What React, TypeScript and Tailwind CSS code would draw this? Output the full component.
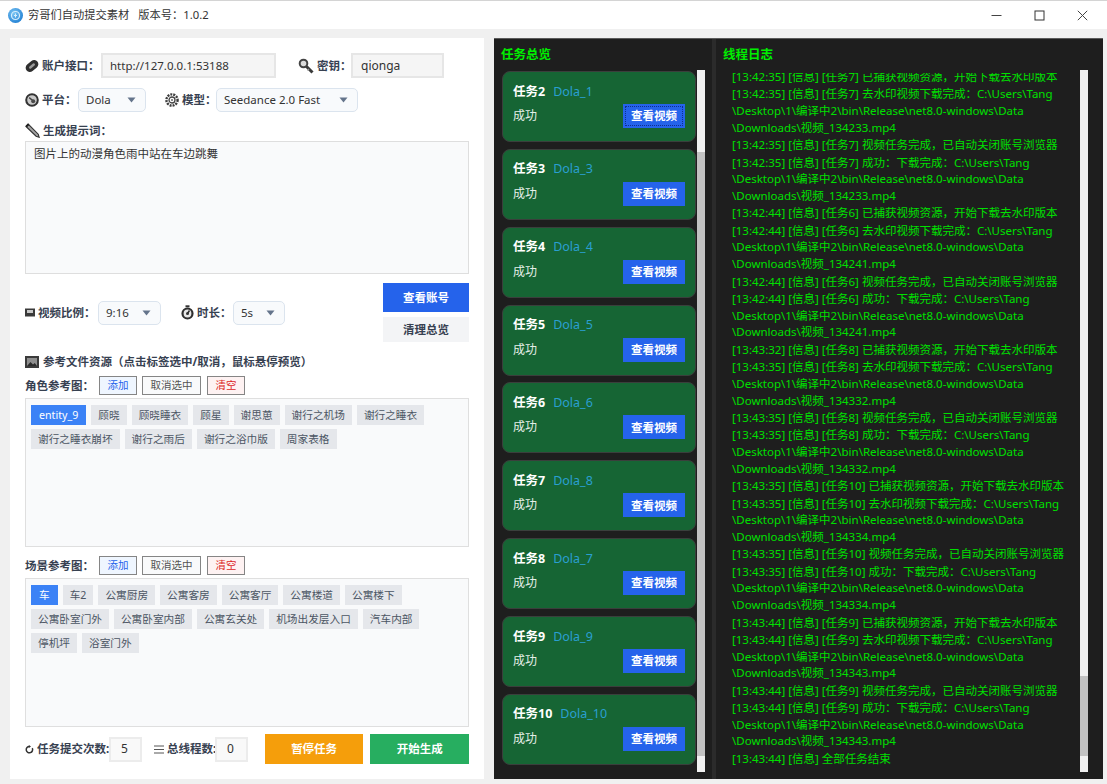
import React from "react";

const IconLink = () => (
  <svg width="14" height="14" viewBox="0 0 14 14" className="shrink-0">
    <g transform="rotate(-40 7 7)">
      <rect x="0" y="2.8" width="14" height="8.4" rx="4.2" fill="#2f2f2f" />
      <rect x="3.5" y="5.8" width="7" height="2.4" rx="1.2" fill="#9a9a9a" />
    </g>
  </svg>
);
const IconKey = () => (
  <svg width="16" height="16" viewBox="0 0 16 16" className="shrink-0">
    <circle cx="5.5" cy="5.5" r="3.8" fill="#dcdcdc" stroke="#444" strokeWidth="2" />
    <path d="M8.5 8.5L14.5 14.5" stroke="#3a3a3a" strokeWidth="3" />
    <path d="M11 11l-1.5 1.5" stroke="#999" strokeWidth="1.2" />
  </svg>
);
const IconDial = () => (
  <svg width="14" height="14" viewBox="0 0 14 14" className="shrink-0">
    <circle cx="7" cy="7" r="5.8" fill="#c9c9c9" stroke="#333" strokeWidth="2" />
    <path d="M4.2 4.6L8 7.8" stroke="#444" strokeWidth="1.4" />
    <circle cx="8.2" cy="8.2" r="2" fill="#4a4a4a" />
  </svg>
);
const IconGear = () => (
  <svg width="14" height="14" viewBox="0 0 14 14" className="shrink-0">
    <circle cx="7" cy="7" r="5.6" fill="none" stroke="#3d3d3d" strokeWidth="2.4" strokeDasharray="2 1" />
    <circle cx="7" cy="7" r="3" fill="none" stroke="#444" strokeWidth="1.3" />
    <circle cx="7" cy="7" r="1" fill="#666" />
  </svg>
);
const IconPencil = () => (
  <svg width="15" height="15" viewBox="0 0 15 15" className="shrink-0">
    <path d="M1 3.4L3.2 1.2l10 10 .9 3-3-.9z" fill="#a5a5a5" stroke="#333" strokeWidth="1.2" />
    <path d="M1.2 3.6l2.4-2.4" stroke="#1f1f1f" strokeWidth="2" />
  </svg>
);
const IconFilm = () => (
  <svg width="10" height="9" viewBox="0 0 10 9" className="shrink-0">
    <rect x="0" y="0.5" width="10" height="8" fill="#3a3a3a" />
    <rect x="2" y="2" width="6" height="3" fill="#c8c8c8" />
  </svg>
);
const IconTimer = () => (
  <svg width="13" height="15" viewBox="0 0 13 15" className="shrink-0">
    <rect x="4.5" y="0.3" width="4" height="2" fill="#333" />
    <circle cx="6.5" cy="8.5" r="5" fill="#e8e8e8" stroke="#2f2f2f" strokeWidth="2.2" />
    <path d="M6.5 8.5L8.5 5.5" stroke="#2f2f2f" strokeWidth="1.5" />
    <circle cx="6.5" cy="8.6" r="1.5" fill="#333" />
  </svg>
);
const IconPicture = () => (
  <svg width="14" height="12" viewBox="0 0 14 12" className="shrink-0">
    <rect x="0" y="0" width="14" height="12" fill="#3b3b3b" />
    <rect x="2" y="2" width="10" height="8" fill="#8f8f8f" />
    <path d="M2 10l3.5-4 2.5 2.5 1.8-1.5L12 10z" fill="#2b2b2b" />
  </svg>
);
const IconRefresh = () => (
  <svg width="9" height="9" viewBox="0 0 9 9" className="shrink-0">
    <path d="M7.3 3.2A3.2 3.2 0 1 1 4.4 1.4" fill="none" stroke="#333" strokeWidth="1.5" />
    <path d="M3.8 0l2.2 1.4-2.2 1.5z" fill="#333" />
  </svg>
);
const IconLines = () => (
  <svg width="10" height="9" viewBox="0 0 10 9" className="shrink-0">
    <path d="M0 1h10M0 4.5h10M0 8h10" stroke="#555" strokeWidth="1" />
  </svg>
);
const Caret = () => (
  <svg width="9" height="6" viewBox="0 0 9 6" className="shrink-0">
    <path d="M0.5 0.5h8L4.5 5.5z" fill="#64748b" />
  </svg>
);

const Select = ({ v, w }: { v: string; w: string }) => (
  <div className={`${w} h-[24px] flex items-center justify-between pl-[7px] pr-[9px] rounded-[5px] bg-[#f8fafc] border border-[#dbe4ee] text-[#333333] text-[11.5px]`}>
    <span>{v}</span>
    <Caret />
  </div>
);

const SmallBtn = ({ t, w, cls }: { t: string; w: string; cls: string }) => (
  <div className={`${w} h-[19px] flex items-center justify-center border border-[#858585] text-[10.5px] ${cls}`}>{t}</div>
);

const Tag = ({ t, on }: { t: string; on?: boolean }) => (
  <div className={`h-[20px] flex items-center text-[10.67px] ${on ? "px-[8px] bg-[#3b82f6] text-white" : "px-[7px] bg-[#e5e7eb] text-[#4b5563]"}`}>{t}</div>
);

const TagBox = ({ tags }: { tags: string[] }) => (
  <div className="w-[444px] h-[149px] bg-[#f9fafb] border border-[#dfdfdf] pl-[5px] pt-[6px] flex flex-wrap content-start gap-x-[5px] gap-y-[4px]">
    {tags.map((t, i) => (
      <Tag key={t} t={t} on={i === 0} />
    ))}
  </div>
);

const Label = ({ icon, t, cls = "" }: { icon?: React.ReactNode; t: string; cls?: string }) => (
  <div className={`flex items-center gap-[3px] text-[11.5px] font-bold text-[#374151] whitespace-nowrap ${cls}`}>
    {icon}
    <span>{t}</span>
  </div>
);

const Card = ({ n, name, focus }: { n: string; name: string; focus?: boolean }) => (
  <div className="w-[194px] h-[71px] shrink-0 rounded-[8px] bg-[#166534] border border-[#3a3f3c] pl-[10px] pr-[10px] pt-[11px]">
    <div className="flex items-center gap-[8px] h-[18px]">
      <span className="text-[12.5px] font-bold text-white">{n}</span>
      <span className="text-[12.5px] text-[#2a9fd0]">{name}</span>
    </div>
    <div className="flex items-center justify-between mt-[3px]">
      <span className="text-[12px] text-[#e5efe8]">成功</span>
      <div className={`w-[62px] h-[24px] bg-[#2563eb] flex items-center justify-center text-[11.5px] font-bold text-white ${focus ? "outline-1 outline-dotted outline-[#0f2f8f] -outline-offset-3" : ""}`}>查看视频</div>
    </div>
  </div>
);

const Scrollbar = ({ top, h, cls }: { top: string; h: string; cls: string }) => (
  <div className={`w-[8px] h-[702px] bg-[#f0f0f0] shrink-0 flex flex-col ${cls}`}>
    <div className={top} />
    <div className={`${h} bg-[#c2c2c2]`} />
  </div>
);

const p = "C:\\Users\\Tang";
const mid = "\\Desktop\\1\\编译中2\\bin\\Release\\net8.0-windows\\Data";
function group(time: string, task: string, vid: string) {
  const t = `[${time}] [信息] [任务${task}] `;
  return {
    dl: [[`${t}去水印视频下载完成：${p}`, mid, `\\Downloads\\视频_${vid}.mp4`]],
    done: [[`${t}视频任务完成，已自动关闭账号浏览器`], [`${t}成功：下载完成：${p}`, mid, `\\Downloads\\视频_${vid}.mp4`]],
  };
}
const cap = (time: string, task: string) => [`[${time}] [信息] [任务${task}] 已捕获视频资源，开始下载去水印版本`];
const g7 = group("13:42:35", "7", "134233");
const g6 = group("13:42:44", "6", "134241");
const g8a = group("13:43:35", "8", "134332");
const g10 = group("13:43:35", "10", "134334");
const g9 = group("13:43:44", "9", "134343");
const entries: string[][] = [
  cap("13:42:35", "7"),
  ...g7.dl,
  ...g7.done,
  cap("13:42:44", "6"),
  ...g6.dl,
  ...g6.done,
  cap("13:43:32", "8"),
  ...g8a.dl,
  ...g8a.done,
  cap("13:43:35", "10"),
  ...g10.dl,
  ...g10.done,
  cap("13:43:44", "9"),
  ...g9.dl,
  ...g9.done,
  [`[13:43:44] [信息] 全部任务结束`],
];

export default function App() {
  return (
    <div className="w-[1107px] h-[784px] overflow-hidden bg-[#f0f0f0] flex flex-col [font-family:'Noto_Sans','Noto_Sans_CJK_SC',sans-serif]">
      {/* Title bar */}
      <div className="h-[29px] shrink-0 bg-white border-t border-[#d4d4d4] flex items-center pl-[8px] text-[11.25px] text-[#333333]">
        <svg width="15" height="15" viewBox="0 0 15 15" className="shrink-0">
          <defs>
            <radialGradient id="a" cx="0.4" cy="0.35" r="0.8">
              <stop offset="0" stopColor="#7cc6f4" />
              <stop offset="1" stopColor="#1476cf" />
            </radialGradient>
          </defs>
          <circle cx="7.5" cy="7.5" r="7.5" fill="url(#a)" />
          <circle cx="7.5" cy="7.5" r="4" fill="none" stroke="#d6eefc" strokeWidth="1.2" />
          <path d="M6 7.5h3M7.5 5.5v4" stroke="#d6eefc" strokeWidth="1" />
        </svg>
        <span className="ml-[5px]">穷哥们自动提交素材</span>
        <span className="ml-[9px]">版本号：1.0.2</span>
        <div className="ml-auto flex items-center">
          <div className="w-[46px] flex justify-center"><svg width="11" height="11" viewBox="0 0 11 11"><path d="M0.5 5.5h10" stroke="#444" strokeWidth="1" /></svg></div>
          <div className="w-[40px] flex justify-center"><svg width="11" height="11" viewBox="0 0 11 11"><rect x="1" y="1" width="9" height="9" fill="none" stroke="#333" strokeWidth="1" /></svg></div>
          <div className="w-[46px] flex justify-center mr-[2px]"><svg width="11" height="11" viewBox="0 0 11 11"><path d="M0.8 0.8l9.4 9.4M10.2 0.8l-9.4 9.4" stroke="#444" strokeWidth="1" /></svg></div>
        </div>
      </div>

      <div className="flex flex-1 pt-[9px] pl-[10px] pb-[5px]">
        {/* Left panel */}
        <div className="w-[474px] h-[741px] bg-white pl-[15px] flex flex-col">
          <div className="flex items-center mt-[15px] h-[25px]">
            <div className="w-[76px]"><Label icon={<IconLink />} t="账户接口：" /></div>
            <div className="w-[175px] h-[25px] flex items-center pl-[7px] bg-[#f5f5f5] border-2 border-[#e6e6e6] text-[11.5px] text-[#333333]">http://127.0.0.1:53188</div>
            <div className="ml-[22px] w-[53px]"><Label icon={<IconKey />} t="密钥：" /></div>
            <div className="w-[93px] h-[25px] flex items-center pl-[8px] bg-[#f5f5f5] border-2 border-[#e6e6e6] text-[12px] text-[#333333]">qionga</div>
          </div>

          <div className="flex items-center mt-[10px] h-[24px]">
            <div className="w-[53px]"><Label icon={<IconDial />} t="平台：" /></div>
            <Select v="Dola" w="w-[68px]" />
            <div className="ml-[19px] w-[51px]"><Label icon={<IconGear />} t="模型：" /></div>
            <Select v="Seedance 2.0 Fast" w="w-[142px]" />
          </div>

          <Label cls="mt-[9px] h-[19px]" icon={<IconPencil />} t="生成提示词：" />
          <div className="w-[444px] h-[133px] bg-[#f9fafb] border border-[#dedede] mt-[1px] pl-[8px] pt-[3px] text-[11.5px] leading-[18px] text-[#333333]">图片上的动漫角色雨中站在车边跳舞</div>

          <div className="flex mt-[9px] w-[444px]">
            <div className="flex items-center h-[25px] mt-[17px]">
              <div className="w-[73px]"><Label icon={<IconFilm />} t="视频比例：" /></div>
              <Select v="9:16" w="w-[63px]" />
              <div className="ml-[20px] w-[52px]"><Label icon={<IconTimer />} t="时长：" /></div>
              <Select v="5s" w="w-[52px]" />
            </div>
            <div className="ml-auto w-[86px] flex flex-col gap-[5px]">
              <div className="h-[29px] bg-[#2563eb] text-white font-bold text-[11.5px] flex items-center justify-center">查看账号</div>
              <div className="h-[25px] bg-[#f3f4f6] text-[#374151] font-bold text-[11.5px] flex items-center justify-center">清理总览</div>
            </div>
          </div>

          <Label cls="mt-[10px] h-[20px] gap-[4px]" icon={<IconPicture />} t="参考文件资源（点击标签选中/取消，鼠标悬停预览）" />

          <div className="flex items-center mt-[4px] h-[19px]">
            <div className="w-[74px]"><Label t="角色参考图：" /></div>
            <SmallBtn t="添加" w="w-[38px]" cls="bg-[#eff6ff] text-[#2563eb]" />
            <SmallBtn t="取消选中" w="w-[59px] ml-[5px]" cls="bg-[#f9fafb] text-[#555555]" />
            <SmallBtn t="清空" w="w-[38px] ml-[6px]" cls="bg-[#fef2f2] text-[#dc2626]" />
          </div>
          <div className="mt-[3px]">
            <TagBox tags={["entity_9", "顾晓", "顾晓睡衣", "顾星", "谢思葸", "谢行之机场", "谢行之睡衣", "谢行之睡衣崩坏", "谢行之雨后", "谢行之浴巾版", "周家表格"]} />
          </div>

          <div className="flex items-center mt-[9px] h-[19px]">
            <div className="w-[74px]"><Label t="场景参考图：" /></div>
            <SmallBtn t="添加" w="w-[38px]" cls="bg-[#eff6ff] text-[#2563eb]" />
            <SmallBtn t="取消选中" w="w-[59px] ml-[5px]" cls="bg-[#f9fafb] text-[#555555]" />
            <SmallBtn t="清空" w="w-[38px] ml-[6px]" cls="bg-[#fef2f2] text-[#dc2626]" />
          </div>
          <div className="mt-[3px]">
            <TagBox tags={["车", "车2", "公寓厨房", "公寓客房", "公寓客厅", "公寓楼道", "公寓楼下", "公寓卧室门外", "公寓卧室内部", "公寓玄关处", "机场出发层入口", "汽车内部", "停机坪", "浴室门外"]} />
          </div>

          <div className="flex items-center mt-[7px] h-[30px] w-[444px]">
            <div className="w-[84px]"><Label icon={<IconRefresh />} t="任务提交次数:" /></div>
            <div className="w-[33px] h-[25px] flex items-center pl-[10px] bg-[#f9f9f9] border-2 border-[#ececec] text-[12px] text-[#333333]">5</div>
            <div className="ml-[12px] w-[61px]"><Label icon={<IconLines />} t="总线程数:" /></div>
            <div className="w-[33px] h-[25px] flex items-center pl-[10px] bg-[#f9f9f9] border-2 border-[#ececec] text-[12px] text-[#333333]">0</div>
            <div className="ml-[17px] w-[99px] h-[30px] bg-[#f59e0b] text-white font-bold text-[11.5px] flex items-center justify-center">暂停任务</div>
            <div className="ml-[7px] w-[99px] h-[30px] bg-[#27ae60] text-white font-bold text-[11.5px] flex items-center justify-center">开始生成</div>
          </div>
        </div>

        {/* Dark panel */}
        <div className="ml-[10px] w-[609px] h-[741px] bg-[#1e1e1e] border-t border-[#5a5a5a] flex">
          <div className="w-[218px] shrink-0 pl-[7px] flex flex-col">
            <div className="h-[31px] pt-[2px] flex items-center text-[12.5px] font-bold text-[#00f000]">任务总览</div>
            <div className="flex h-[702px]">
              <div className="w-[195px] pl-[1px] overflow-hidden flex flex-col gap-[6.85px] pt-[1px]">
                <Card n="任务2" name="Dola_1" focus />
                <Card n="任务3" name="Dola_3" />
                <Card n="任务4" name="Dola_4" />
                <Card n="任务5" name="Dola_5" />
                <Card n="任务6" name="Dola_6" />
                <Card n="任务7" name="Dola_8" />
                <Card n="任务8" name="Dola_7" />
                <Card n="任务9" name="Dola_9" />
                <Card n="任务10" name="Dola_10" />
              </div>
              <Scrollbar top="h-[82px]" h="h-[604px]" cls="ml-[1px]" />
            </div>
          </div>
          <div className="w-[4px] shrink-0 bg-[#2b2b2b]" />
          <div className="flex-1 pl-[7px] flex flex-col min-w-0">
            <div className="h-[31px] pt-[2px] flex items-center text-[12.5px] font-bold text-[#00f000]">线程日志</div>
            <div className="flex h-[702px]">
              <div className="w-[348px] ml-[9px] mt-[3px] h-[699px] overflow-hidden text-[11.5px] leading-[16.7px] text-[#00e000] whitespace-nowrap">
                <div className="-mt-[4px] flex flex-col gap-[0.7px]">
                  {entries.map((e, i) => (
                    <div key={i}>
                      {e.map((l, j) => (
                        <div key={j}>{l}</div>
                      ))}
                    </div>
                  ))}
                </div>
              </div>
              <Scrollbar top="h-[606px]" h="h-[80px]" cls="" />
            </div>
          </div>
        </div>
      </div>
    </div>
  );
}
